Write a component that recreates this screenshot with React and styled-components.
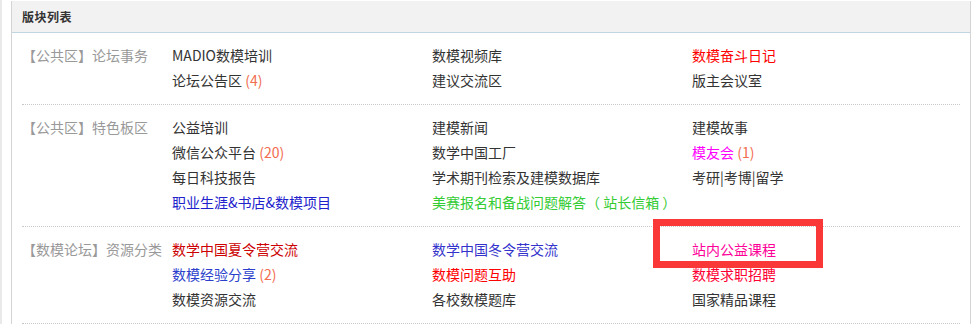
import React from 'react'
import styled, { createGlobalStyle } from 'styled-components'

const GlobalStyle = createGlobalStyle`
    html, body {
        margin: 0;
        padding: 0;
        background: #fff;
    }
    body {
        font-family: "Noto Sans CJK SC", "Noto Sans", sans-serif;
        font-size: 14px;
        color: #333;
    }
`

const Page = styled.div`
    padding: 1px 5px 0 0;
    border-left: 2px solid #e9e9e9;
`

const Panel = styled.div`
    margin-left: 9px;
    border-left: 1px solid #d4d4d4;
    border-right: 1px solid #d4d4d4;
`

const Header = styled.div`
    height: 31px;
    background: #f2f2f2;
    border-bottom: 1px solid #c2d5e3;
    display: flex;
    align-items: center;
    padding-left: 10px;
`

const Title = styled.h2`
    margin: 0;
    font-size: 12px;
    font-weight: bold;
    color: #333;
    letter-spacing: 0.5px;
`

const Body = styled.div`
    padding: 0 10px;
`

const Section = styled.div`
    display: flex;
    padding: 10px 0 11px;
    border-bottom: 1px dotted #c8c8c8;
    line-height: 25px;
`

const Label = styled.div`
    width: 150px;
    flex-shrink: 0;
    color: #999;
    white-space: nowrap;
`

const Links = styled.div`
    flex: 1;
    display: grid;
    grid-template-columns: 260px 260px 1fr;
`

const Item = styled.div`
    position: relative;
    white-space: nowrap;
`

const Link = styled.a`
    color: ${p => p.color || '#333'};
    text-decoration: none;
`

const Count = styled.span`
    color: #f26c4f;
`

const Highlight = styled.span`
    position: absolute;
    left: -39px;
    top: -18px;
    width: 156px;
    height: 35px;
    border: 7px solid #fa3838;
    pointer-events: none;
`

const sections = [
    {
        label: '【公共区】论坛事务',
        items: [
            { name: 'MADIO数模培训' },
            { name: '数模视频库' },
            { name: '数模奋斗日记', color: '#ff0000' },
            { name: '论坛公告区', count: 4 },
            { name: '建议交流区' },
            { name: '版主会议室' },
        ],
    },
    {
        label: '【公共区】特色板区',
        items: [
            { name: '公益培训' },
            { name: '建模新闻' },
            { name: '建模故事' },
            { name: '微信公众平台', count: 20 },
            { name: '数学中国工厂' },
            { name: '模友会', color: '#ff00ff', count: 1 },
            { name: '每日科技报告' },
            { name: '学术期刊检索及建模数据库' },
            { name: '考研|考博|留学' },
            { name: '职业生涯&书店&数模项目', color: '#2222cc' },
            { name: '美赛报名和备战问题解答（ 站长信箱 ）', color: '#33cc33' },
        ],
    },
    {
        label: '【数模论坛】资源分类',
        items: [
            { name: '数学中国夏令营交流', color: '#cc0000' },
            { name: '数学中国冬令营交流', color: '#3333cc' },
            { name: '站内公益课程', color: '#ff0099', marked: true },
            { name: '数模经验分享', color: '#2b3fcc', count: 2 },
            { name: '数模问题互助', color: '#ff0000' },
            { name: '数模求职招聘', color: '#ff0033' },
            { name: '数模资源交流' },
            { name: '各校数模题库' },
            { name: '国家精品课程' },
        ],
    },
]

const App = () => {
    return (
        <Page>
            <GlobalStyle />
            <Panel>
                <Header>
                    <Title>版块列表</Title>
                </Header>
                <Body>
                    {sections.map((section) => (
                        <Section key={section.label}>
                            <Label>{section.label}</Label>
                            <Links>
                                {section.items.map((item) => (
                                    <Item key={item.name}>
                                        <Link href='#' color={item.color}>{item.name}</Link>
                                        {item.count !== undefined && <Count> ({item.count})</Count>}
                                        {item.marked && <Highlight />}
                                    </Item>
                                ))}
                            </Links>
                        </Section>
                    ))}
                </Body>
            </Panel>
        </Page>
    )
}

export default App
